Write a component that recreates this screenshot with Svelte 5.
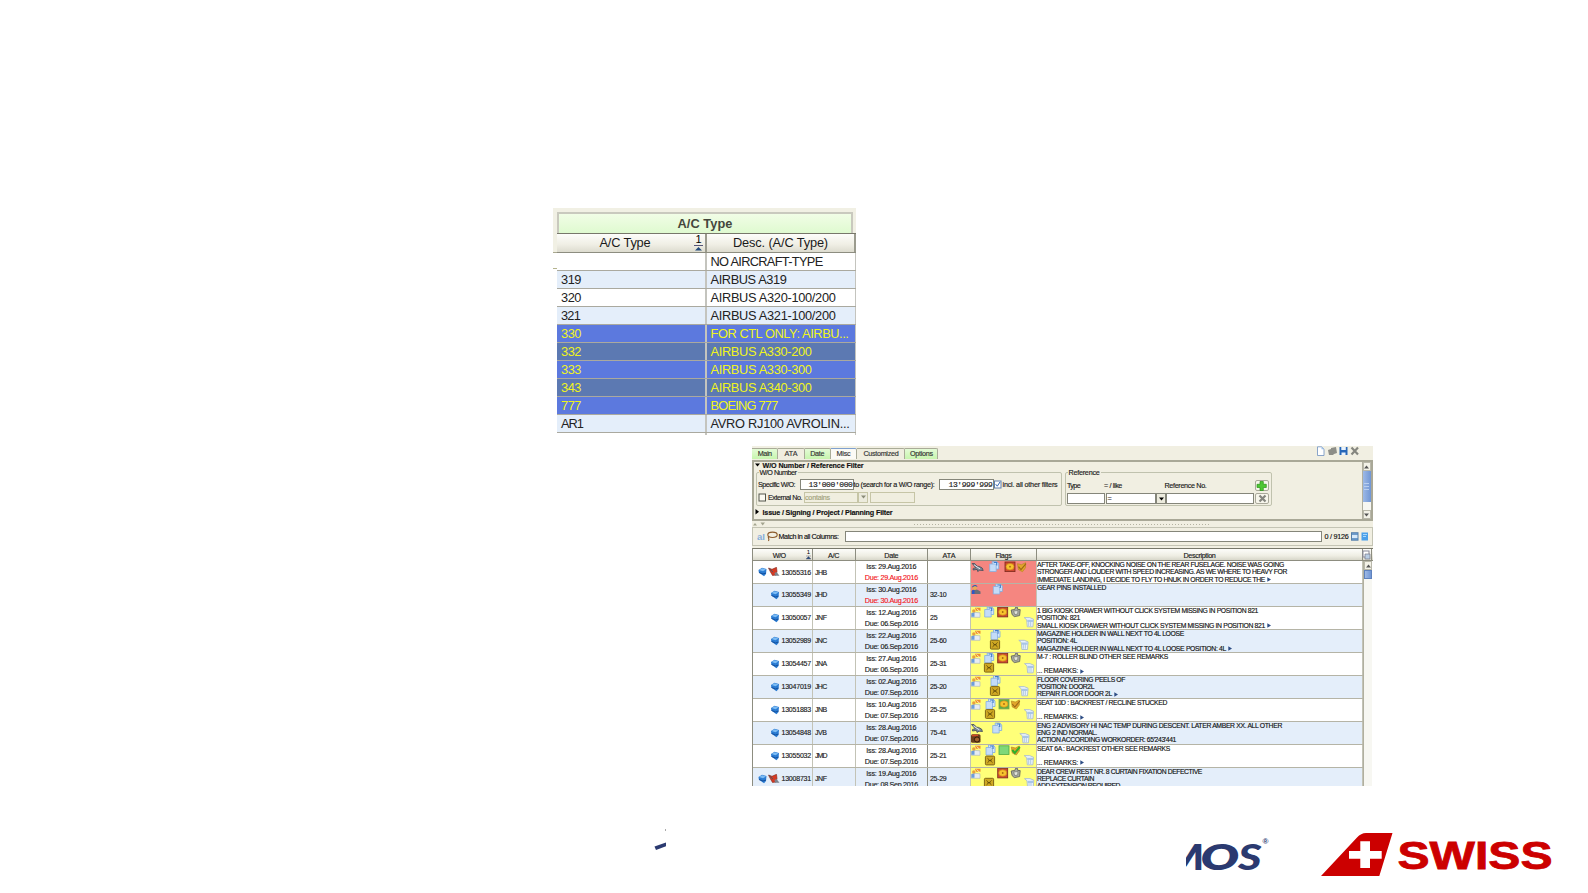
<script>
  // Spaces the letters of a label so that it fills the given width.
  function fit(node, width) {
    const n = [...node.textContent].length;
    const natural = node.getBoundingClientRect().width;
    if (n && width) node.style.letterSpacing = (width - natural) / n + 'px';
  }

  const types = [
    ['', 0, 'NO AIRCRAFT-TYPE', 112],
    ['319', 20, 'AIRBUS A319', 76],
    ['320', 20, 'AIRBUS A320-100/200', 125],
    ['321', 19, 'AIRBUS A321-100/200', 125],
    ['330', 20, 'FOR CTL ONLY: AIRBU...', 138],
    ['332', 20, 'AIRBUS A330-200', 101],
    ['333', 20, 'AIRBUS A330-300', 101],
    ['343', 20, 'AIRBUS A340-300', 101],
    ['777', 20, 'BOEING 777', 67],
    ['AR1', 22, 'AVRO RJ100 AVROLIN...', 139]
  ];

  const tabs = [
    ['Main', 26.4, 14, 'g'], ['ATA', 26.3, 13, ''], ['Date', 26, 14, 'g'],
    ['Misc', 26.7, 14, 'on'], ['Customized', 48, 35, ''], ['Options', 33, 23, 'g']
  ];

  const rem = ['... REMARKS:', 41, 1];
  const rows = [
    { no: "13055316", ac: 'JHB', iss: '29.Aug.2016', due: '29.Aug.2016', late: 1, ata: '', bell: 1, bg: 'red',
      f: [['plane', 6.7, 6], ['doc', 22.7, 5.5], ['seal', 39, 5.7], ['tick', 50.5, 5.7]],
      d: [['AFTER TAKE-OFF, KNOCKING NOISE ON THE REAR FUSELAGE. NOISE WAS GOING', 247], ['STRONGER AND LOUDER WITH SPEED INCREASING. AS WE WHERE TO HEAVY FOR', 250], ['IMMEDIATE LANDING, I DECIDE TO FLY TO HNUK IN ORDER TO REDUCE THE', 228, 1]] },
    { no: "13055349", ac: 'JHD', iss: '30.Aug.2016', due: '30.Aug.2016', late: 1, ata: '32-10', bg: 'red',
      f: [['person', 5, 5.5], ['doc', 26.3, 5]],
      d: [['GEAR PINS INSTALLED', 69]] },
    { no: "13050057", ac: 'JNF', iss: '12.Aug.2016', due: '06.Sep.2016', ata: '25', bg: 'yel',
      f: [['man', 5, 5.3], ['doc', 17.7, 5], ['seal', 31.7, 5], ['cup', 44.7, 5], ['bin', 57.7, 15]],
      d: [['1 BIG KIOSK DRAWER WITHOUT CLICK SYSTEM MISSING IN POSITION 821', 221], ['POSITION: 821', 43], ['SMALL KIOSK DRAWER WITHOUT CLICK SYSTEM MISSING IN POSITION 821', 228, 1]] },
    { no: "13052989", ac: 'JNC', iss: '22.Aug.2016', due: '06.Sep.2016', ata: '25-60', bg: 'yel',
      f: [['man', 5, 5.3], ['doc', 24, 4.7], ['box', 24, 14.7], ['bin', 52.3, 14.7]],
      d: [['MAGAZINE HOLDER IN WALL NEXT TO 4L LOOSE', 147], ['POSITION: 4L', 40], ['MAGAZINE HOLDER IN WALL NEXT TO 4L LOOSE POSITION: 4L', 189, 1]] },
    { no: "13054457", ac: 'JNA', iss: '27.Aug.2016', due: '06.Sep.2016', ata: '25-31', bg: 'yel',
      f: [['man', 5, 5.3], ['doc', 17.7, 5], ['seal', 31.7, 5], ['cup', 44.7, 5], ['box', 18, 14.7], ['bin', 58, 15]],
      d: [['M-7 : ROLLER BLIND OTHER SEE REMARKS', 131], ['', 0], rem] },
    { no: "13047019", ac: 'JHC', iss: '02.Aug.2016', due: '07.Sep.2016', ata: '25-20', bg: 'yel',
      f: [['man', 5, 5.3], ['doc', 24, 4.7], ['box', 24, 15], ['bin', 52.3, 15]],
      d: [['FLOOR COVERING PEELS OF', 88], ['POSITION: DOOR2L', 57], ['REPAIR FLOOR DOOR 2L', 75, 1]] },
    { no: "13051883", ac: 'JNB', iss: '10.Aug.2016', due: '07.Sep.2016', ata: '25-25', bg: 'yel',
      f: [['man', 5, 5.3], ['doc', 19, 5], ['gseal', 33, 5], ['tick', 44.3, 5], ['box', 19, 15], ['bin', 57.7, 15]],
      d: [['SEAT 10D : BACKREST / RECLINE STUCKED', 130], ['', 0], rem] },
    { no: "13054848", ac: 'JVB', iss: '28.Aug.2016', due: '07.Sep.2016', ata: '75-41', bg: 'yel',
      f: [['plane', 6, 6], ['doc', 25.7, 6], ['cam', 5, 16.5], ['bin', 53.3, 16]],
      d: [['ENG 2 ADVISORY HI NAC TEMP DURING DESCENT. LATER AMBER XX. ALL OTHER', 245], ['ENG 2 IND NORMAL.', 60], ["ACTION ACCORDING WORKORDER: 65'243'441", 139]] },
    { no: "13055032", ac: 'JMD', iss: '28.Aug.2016', due: '07.Sep.2016', ata: '25-21', bg: 'yel',
      f: [['man', 5, 5.3], ['doc', 19, 5], ['green', 33, 5.3], ['gtick', 44.3, 5], ['box', 19, 15.5], ['bin', 57.7, 15]],
      d: [['SEAT 6A : BACKREST OTHER SEE REMARKS', 133], ['', 0], rem] },
    { no: "13008731", ac: 'JNF', iss: '19.Aug.2016', due: '08.Sep.2016', ata: '25-29', bell: 1, bg: 'yel',
      f: [['man', 5, 5.3], ['seal', 31.7, 5], ['cup', 44.7, 5], ['box', 18, 14.7], ['bin', 58, 15]],
      d: [['DEAR CREW REST NR. 8 CURTAIN FIXATION DEFECTIVE', 165], ['REPLACE CURTAIN', 57], ['ADD EXTENSION REQUIRED', 83]] }
  ];
</script>

{#snippet t(text, width)}{#if text}<span class="t" use:fit={width}>{text}</span>{/if}{/snippet}

{#snippet flag(kind)}
  {#if kind === 'plane'}
    <path d="M-5.5-3.5L-3-3.5-.5-.8 1.5-.6 4.5 1 5.5 3.5 2 3.2 0 4.5-.5 2.4-4.5 3-4.5 1.4-1.8.8z" fill="#7c8998" stroke="#414a56" stroke-width=".8" />
    <path d="M-3.5-2L2.5 2" stroke="#e3e9ef" stroke-width="1" />
  {:else if kind === 'doc'}
    <path d="M-1.5-5H3L5-3V2.5H-1.5z" fill="#d4e6fb" stroke="#7ba9e0" stroke-width=".8" />
    <path d="M-4-2.5H1L2.5-1V5H-4z" fill="#c4dcf8" stroke="#86aee0" stroke-width=".8" />
    <path d="M0-4H3V-1" fill="none" stroke="#3f7ccb" stroke-width="1.2" />
  {:else if kind === 'seal' || kind === 'gseal'}
    <rect x="-5" y="-4.7" width="10" height="9.6" fill={kind === 'seal' ? '#cf4a30' : '#5fae45'} stroke={kind === 'seal' ? '#7c2a1c' : '#7fa050'} stroke-width=".8" />
    <ellipse rx="4" ry="3.2" fill="#f8c32e" stroke="#c98a18" stroke-width=".6" />
    <circle r=".9" fill="#a86a10" />
  {:else if kind === 'tick' || kind === 'gtick'}
    <path d="M-4-3L0-2 4-4 4 1 1 5-3 3z" fill="#e2a52c" stroke="#b98a20" stroke-width=".7" />
    <path d="M-3 0L-.5 3 4.5-3" fill="none" stroke={kind === 'tick' ? '#9a6616' : '#2fb02a'} stroke-width={kind === 'tick' ? 1.1 : 2} />
  {:else if kind === 'green'}
    <rect x="-5" y="-4.5" width="10" height="8.6" fill="#7ed879" stroke="#4da845" stroke-width=".8" />
  {:else if kind === 'person'}
    <path d="M-4.500 4.500V1.500L-2.500 0H.5L2 .5 4.500 2V4.500z" fill="#6a6d78" />
    <path d="M-4 4.500V1L-1.500 .3V4.500z" fill="#2e55c8" />
    <circle cx="-1.300" cy="-1.800" r="2.300" fill="#e9ad55" />
    <path d="M-4-2C-4-5 1-5.600 1.400-2.600L-1-3.400z" fill="#3858b4" />
  {:else if kind === 'man'}
    <path d="M-4.500 5V1L-2 0 4 .5V5z" fill="#e7ecf2" stroke="#a6b2bf" stroke-width=".6" />
    <path d="M-4.500 4.500V1L-1.500 0V4.500z" fill="#6d9ddb" />
    <circle cx="-2.200" cy="-1.400" r="1.700" fill="#e9a13c" />
    <path d="M-1-4.500L4.500-4.500 4.500-1.500 0-1.500z" fill="#ef8f2a" />
    <path d="M.5-3.800L3.700-1" stroke="#f8ead0" stroke-width=".9" />
  {:else if kind === 'cup'}
    <path d="M-4.500-2L-1-2.500 0-4.800 1.800-4.600 2-2.600 4.500-2.400 3.900 3.600-1.400 4.600-3.600 2.600z" fill="#a9aca2" stroke="#62645c" stroke-width=".9" />
    <path d="M-2-1L2.200-1.500 2 2-1 2.600z" fill="#e2e5dc" stroke="#6b6d65" stroke-width=".6" />
  {:else if kind === 'box'}
    <rect x="-4.600" y="-4.400" width="9.200" height="8.800" rx="1" fill="#cfa823" stroke="#806617" stroke-width="1" />
    <path d="M-2.500-2.200C0 0 0 0-2.500 2.200M2.500-2.200C0 0 0 0 2.500 2.200M-1.300 0H1.300" fill="none" stroke="#594508" stroke-width=".9" />
  {:else if kind === 'bin'}
    <path d="M-4.500-4.400H1L4.800-2.800 4.200 4.800-1.400 4.800-2-2.200z" fill="#eaf2fb" stroke="#a5b8cf" stroke-width=".8" />
    <path d="M-1.500-2.200H4.400V0H-1.500z" fill="#a9c6ea" /><path d="M0-1.500V4M2-1.500V4" stroke="#a9c3e2" stroke-width=".9" />
  {:else if kind === 'cam'}
    <rect x="-5" y="-4.300" width="9.500" height="8.600" rx="1.500" fill="#6b3f1d" />
    <path d="M-4-3H2" stroke="#d24a26" stroke-width="1.600" />
    <circle cx="1" cy="1" r="2.600" fill="#a3622c" stroke="#321a0a" stroke-width="1" />
  {/if}
{/snippet}

<main>
  <section class="types">
    <div class="group"><b>{@render t('A/C Type', 55)}</b></div>
    <div class="thead">
      <div class="h1">{@render t('A/C Type', 51)}
        <svg class="sort" width="9" height="18" viewBox="0 0 9 18"><text x="1.500" y="8.500" font-size="11">1</text><path d="M0 11.500H9" stroke="#557" /><path d="M1 16.500L4.500 13 8 16.500z" fill="#234a7c" /></svg>
      </div>
      <div class="h2">{@render t('Desc. (A/C Type)', 95)}</div>
    </div>
    {#each types as [code, cw, desc, dw], i}
      <div class="trow" class:alt={i % 2 === 1} class:sel={i >= 4 && i <= 8}>
        <div>{@render t(code, cw)}</div><div>{@render t(desc, dw)}</div>
      </div>
    {/each}
    <div class="trow last"><div></div><div></div></div>
  </section>

  <section class="wo">
    <div class="tabs">
      {#each tabs as [name, w, tw, c]}
        <div class="tab {c}" style="width:{w}px">{@render t(name, tw)}</div>
      {/each}
      <svg class="tools" width="44" height="11" viewBox="0 0 44 11">
        <path d="M1.500 .8H5.500L8 3.200V9.500H1.500z" fill="#fff" stroke="#6d8fc0" stroke-width=".8" /><path d="M5.500 .8V3.200H8" fill="#9dc0ea" />
        <path d="M12 4L15 3V2L20 1 21 7 18 8 17 9H13z" fill="#8d8e88" />
        <path d="M23.500 1H31.500V9H23.500z" fill="#2767b8" /><path d="M25.300 1H29.800V4H25.300zM25.500 6.500H29.500V9H25.500z" fill="#e9f2fc" />
        <path d="M35.500 1.500L42 8.500M42 1.500L35.500 8.500" stroke="#85867f" stroke-width="2.200" />
      </svg>
    </div>

    <div class="filter">
      <div class="fmain">
        <div class="ftitle"><svg width="5" height="4"><path d="M0 .5H5L2.500 3.500z" /></svg><b>{@render t('W/O Number / Reference Filter', 101)}</b></div>
        <div class="sets">
          <div class="fs one">
            <span class="legend">{@render t('W/O Number', 37)}</span>
            <div class="line">
              <span class="lab" style="width:41.5px">{@render t('Specific W/O:', 37)}</span>
              <span class="inp mono" style="width:54px">{@render t("13'000'000", 44)}</span>
              <span class="lab" style="width:85.5px">{@render t('to (search for a W/O range):', 81)}</span>
              <span class="inp mono" style="width:54.5px">{@render t("13'999'999", 44)}</span>
              <svg class="chk" width="8" height="9"><rect x=".5" y="1" width="6.500" height="7" fill="#fff" stroke="#5c7fae" /><path d="M1.700 4.200L3.300 6.200 6 2" fill="none" stroke="#2f65b0" /></svg>
              <span class="lab">{@render t('incl. all other filters', 55)}</span>
            </div>
            <div class="line two">
              <svg class="chk" width="9" height="9"><rect x="1" y="1" width="6.500" height="7" fill="#fbfaf2" stroke="#55564c" /></svg>
              <span class="lab" style="width:36px">{@render t('External No.', 34)}</span>
              <span class="inp off" style="width:54px">{@render t('contains', 25)}</span>
              <span class="drop off"><svg width="5" height="4"><path d="M0 .5H5L2.500 3.500z" fill="#8a8b78" /></svg></span>
              <span class="inp off" style="width:45px;margin-left:2px"></span>
            </div>
          </div>
          <div class="fs ref">
            <span class="legend">{@render t('Reference', 31)}</span>
            <div class="line heads">
              <span class="lab" style="width:37px">{@render t('Type', 13)}</span>
              <span class="lab" style="width:60.5px">{@render t('= / like', 18)}</span>
              <span class="lab" style="width:90px">{@render t('Reference No.', 42)}</span>
              <span class="btn"><svg width="11" height="10"><path d="M4 .5H7.300V3.300H10.300V6.500H7.300V9.500H4V6.500H1V3.300H4z" fill="#4fc734" stroke="#2c941a" stroke-width=".7" /></svg></span>
            </div>
            <div class="line boxes">
              <span class="inp" style="width:37.5px"></span>
              <span class="inp" style="width:50.5px;margin-left:1px;padding-left:1px">=</span>
              <span class="drop"><svg width="5" height="4"><path d="M0 .5H5L2.500 3.500z" /></svg></span>
              <span class="inp" style="width:88px"></span>
              <span class="btn" style="margin-left:1px"><svg width="11" height="9"><path d="M2.500 1.500L8.500 7.500M8.500 1.500L2.500 7.500" stroke="#85867f" stroke-width="2.200" /></svg></span>
            </div>
          </div>
        </div>
        <div class="ftitle second"><svg width="5" height="6"><path d="M.5 0L4 2.700.5 5.500z" /></svg><b>{@render t('Issue / Signing / Project / Planning Filter', 130)}</b></div>
      </div>
      <div class="bar">
        <span class="sb"><svg width="5" height="4"><path d="M0 3.500H5L2.500 .5z" fill="#555" /></svg></span>
        <span class="thumb"><i></i><i></i><i></i></span>
        <span class="sb end"><svg width="5" height="4"><path d="M0 .5H5L2.500 3.500z" fill="#555" /></svg></span>
      </div>
    </div>

    <div class="split"><svg width="12" height="4"><path d="M0 3.500H4L2 1zM7.500 .5H12L9.700 3.500z" fill="#a3a48e" /></svg><div class="dots"></div></div>

    <div class="search">
      <svg width="22" height="11" viewBox="0 0 22 11"><text x="0" y="9" font-size="9.500" font-weight="bold" fill="#86aedb">aI</text>
        <ellipse cx="15.500" cy="3.800" rx="4.700" ry="2.700" fill="none" stroke="#8b5a2a" stroke-width="1.100" /><path d="M12 5.500C10 6.500 13 7 11.500 10" fill="none" stroke="#8b5a2a" stroke-width="1.100" /></svg>
      <span class="match">{@render t('Match in all Columns:', 60)}</span>
      <span class="inp wide"></span>
      <span class="count">{@render t('0 / 9126', 24)}</span>
      <svg width="18" height="9"><rect x=".5" y=".7" width="6.500" height="7.500" fill="#d6e9fa" stroke="#557ea8" /><path d="M1 2H7M1 7H7" stroke="#4c83bb" stroke-width="1.300" /><rect x="10.500" y=".5" width="6.500" height="8" fill="#4aa0ea" /><path d="M12 2.500H16M12 4.500H15" stroke="#a8d8fa" /></svg>
    </div>

    <div class="grid">
      <div class="ghead">
        <div class="wcol">{@render t('W/O', 13)}<svg class="sort" width="5" height="11"><text x=".8" y="5" font-size="6">1</text><path d="M0 7H5M0 10H5L2.500 7.500z" fill="#234a7c" stroke="#667" stroke-width=".5" /></svg></div>
        <div>{@render t('A/C', 11)}</div><div>{@render t('Date', 14)}</div><div>{@render t('ATA', 13)}</div>
        <div>{@render t('Flags', 16)}</div><div>{@render t('Description', 32)}</div>
        <div><svg width="9" height="10"><rect x="1" y="1" width="6" height="6" fill="#fff" stroke="#889" /><path d="M3 4H8V9H3z" fill="#b9cde4" stroke="#778" stroke-width=".7" /></svg></div>
      </div>
      <div class="gbody">
        <div class="rows">
          {#each rows as r, i}
            <div class="grow" class:alt={i % 2 === 1}>
              <div class="no">
                <svg width={r.bell ? 24 : 12} height="10" viewBox="{r.bell ? -12 : 0} 0 {r.bell ? 24 : 12} 10">
                  <g transform="translate({r.bell ? -12 : 0.5} 0)"><path d="M.5 3L4 .8 8.500 2 8 7 6 9.300 3.500 7.500.8 5.500z" fill="#2a7bd2" /><path d="M1 3L4.200 1.200 8 2.400 5 4.300z" fill="#7dbcf4" /><path d="M1 5.500L5 7 8 6" fill="none" stroke="#144f9c" /></g>
                  {#if r.bell}<path d="M-1.500 1L2 2.300 6.500 .3 7 4.500 6 8 2.500 8.500 .5 5z" fill="#d63a24" stroke="#80261a" stroke-width=".6" /><path d="M4.500 6L6.500 5 9.500 8.700H5z" fill="#7b828c" /><path d="M-1 1.500L3 5" stroke="#4e5662" stroke-width="1" />{/if}
                </svg>
                {@render t(r.no, 29.5)}
              </div>
              <div class="ac">{@render t(r.ac, 11.5)}</div>
              <div class="date"><div>{@render t('Iss: ' + r.iss, 50)}</div><div class:late={r.late}>{@render t('Due: ' + r.due, 53)}</div></div>
              <div class="ata">{@render t(r.ata, r.ata.length > 2 ? 16.5 : 7.5)}</div>
              <div class="flags {r.bg}">
                <svg width="66" height="22" viewBox="0 0 66 22">
                  {#each r.f as [k, x, y]}<g transform="translate({x} {y})">{@render flag(k)}</g>{/each}
                </svg>
              </div>
              <div class="desc">
                {#each r.d as [s, w, more]}
                  <div>{@render t(s, w)}{#if more}<svg width="8" height="5"><path d="M2.300 .2L6 2.500 2.300 4.800z" fill="#2d4d85" /></svg>{/if}</div>
                {/each}
              </div>
            </div>
          {/each}
        </div>
        <div class="bar">
          <span class="sb"><svg width="5" height="4"><path d="M0 3.500H5L2.500 .5z" fill="#555" /></svg></span>
          <span class="thumb short"></span>
        </div>
      </div>
    </div>
  </section>

  <footer>
    <svg class="mark" width="14" height="25" viewBox="0 0 14 25"><path d="M.5 18.500L12 14.500V18.300L2 22z" fill="#2b3a70" /><path d="M11.500 1V3" stroke="#aaa" stroke-width="1" /></svg>
    <svg class="mos" width="86" height="48" viewBox="1186 832 86 48">
      <g fill="#2b3a70" font-family="Lato" font-weight="900" font-size="35.500">
        <text x="1163" y="869.700" textLength="41.500" lengthAdjust="spacingAndGlyphs">M</text>
        <text x="1200.500" y="869.500" font-style="italic" font-weight="800" textLength="38.500" lengthAdjust="spacingAndGlyphs">O</text>
        <text x="1238" y="869.500" font-style="italic" textLength="23.500" lengthAdjust="spacingAndGlyphs">S</text>
      </g>
      <text x="1262.500" y="844" font-size="8" font-weight="bold" fill="#2b3a70">®</text>
    </svg>
    <svg class="swiss" width="234" height="48" viewBox="1320 832 234 48">
      <path d="M1321 876L1357 837.500Q1361 833 1366 833H1392.500L1379.300 876z" fill="#c00" />
      <path d="M1360.300 841.300H1370V851H1381.700V858.700H1370V868H1360.300V858.700H1349V851H1360.300z" fill="#fff" />
      <text x="1397.500" y="868.500" font-size="38.500" font-weight="bold" fill="#c00" stroke="#c00" stroke-width=".8" textLength="155" lengthAdjust="spacingAndGlyphs">SWISS</text>
    </svg>
  </footer>
</main>

<style>
  :global(body) { margin: 0; background: #fff; }
  main { width: 1588px; height: 893px; overflow: hidden; display: flex; flex-direction: column; align-items: flex-start; font-family: "Liberation Sans", Arial, sans-serif; color: #1a1a1a; }
  svg { display: block; flex: none; }
  .t { display: inline-block; white-space: pre; flex: none; }

  .types { margin: 208px 0 0 553px; width: 303px; height: 227px; flex: none; box-sizing: border-box; padding-top: 4px; overflow: hidden; background: linear-gradient(#f1f0e4 44px, #a9a890 44px 45px, #fff 45px 60px, #b5b48e 60px 61px, #fff 61px); font-size: 12.8px; }
  .group { margin-left: 4px; width: 296px; height: 20.500px; box-sizing: border-box; border: 2px solid #c9c9be; border-bottom: 0; background: linear-gradient(#f1fde6, #dffad0); display: flex; justify-content: center; align-items: center; color: #44473c; }
  .thead { display: flex; height: 20px; box-sizing: border-box; border-top: 1px solid #77776a; border-bottom: 1px solid #8d8d80; background: linear-gradient(#fdfdfa, #efeee4 60%, #dddccf); margin-left: 4px; }
  .thead > div { display: flex; justify-content: center; align-items: center; box-sizing: border-box; border-right: 2px solid #9b9b8e; }
  .h1 { width: 150px; position: relative; padding-right: 12px; }
  .h1 .sort { position: absolute; right: 2px; top: 0; }
  .h2 { width: 149px; }
  .trow { display: flex; margin-left: 4px; height: 18.030px; box-sizing: border-box; border-bottom: 1px solid #aaa99f; background: #fff; color: #222; }
  .trow > div { box-sizing: border-box; width: 149.500px; border-right: 2px solid #c4c4be; padding-left: 4px; display: flex; align-items: center; }
  .trow > div:last-child { width: 149px; border-right-width: 1px; }
  .trow.alt, .grow.alt { background: #e4eefa; }
  .trow.sel { background: #5c79de; color: #f0f41c; }
  .trow.sel.alt { background: #5c79b2; }

  .wo { margin: 11px 0 0 752px; width: 621px; height: 340px; flex: none; overflow: hidden; background: #f1efe2; font-size: 7.200px; display: flex; flex-direction: column; -webkit-text-stroke: .15px currentColor; }
  .tabs { display: flex; height: 14px; box-sizing: border-box; padding-top: 1.500px; flex: none; }
  .tab { height: 11.500px; box-sizing: border-box; border: 1px solid #a9ab98; border-left-width: 0; border-bottom: 0; border-top-right-radius: 2px; display: flex; justify-content: center; align-items: center; background: #f0eee0; color: #333; }
  .tab.g { background: linear-gradient(#e4fbd6, #c7f5ae); }
  .tab.on { background: #fbfaf5; border-top: 1px solid #7fa0cf; }
  .tools { margin: -2px 13px 0 auto; }
  .filter { height: 61px; flex: none; box-sizing: border-box; border: 2px solid #a9a897; display: flex; padding: 0; }
  .fmain { flex: 1; }
  .ftitle { display: flex; align-items: center; height: 8px; padding-left: 1px; gap: 2.500px; color: #111; margin-top: -1px; }
  .second { margin-top: 2px; }
  .sets { display: flex; gap: 3px; padding: 3px 0 0 1.500px; }
  .fs { border: 1px solid #c0c2ae; border-radius: 2px; height: 34px; box-sizing: border-box; position: relative; }
  .one { width: 306px; padding: 6px 0 0 1.500px; }
  .ref { width: 207px; padding: 7px 0 0 1.500px; }
  .legend { position: absolute; left: 2px; top: -4.500px; background: #f1efe2; padding: 0 1px; line-height: 8px; }
  .line { display: flex; align-items: center; height: 11px; white-space: nowrap; }
  .two { margin-top: 1.500px; }
  .lab { display: block; flex: none; line-height: 9px; }
  .inp { height: 11px; box-sizing: border-box; border: 1px solid #85867a; background: #fff; flex: none; display: flex; align-items: center; }
  .mono { font-family: "Liberation Mono", monospace; font-size: 8px; justify-content: flex-end; }
  .chk { margin: 0 1px 0 0; }
  .off { background: #f0eedf; border-color: #c6c5a6; color: #a2a27c; }
  .drop { width: 10px; height: 11px; box-sizing: border-box; border: 1px solid #85867a; background: #ecebdd; display: flex; align-items: center; justify-content: center; flex: none; }
  .drop.off { border-color: #c6c5a6; }
  .btn { width: 14px; height: 11px; box-sizing: border-box; border: 1px solid #aaa99a; border-radius: 2px; background: #f7f6ec; display: flex; flex: none; align-items: center; justify-content: center; }
  .boxes { margin-top: 2px; }
  .bar { width: 9px; flex: none; background: #f7f7f2; border-left: 1px solid #b0af9f; box-sizing: border-box; display: flex; flex-direction: column; }
  .filter .bar { width: 9.500px; }
  .sb { height: 9px; box-sizing: border-box; border: 1px solid #b9b8aa; background: #f3f2e8; display: flex; align-items: center; justify-content: center; flex: none; }
  .end { margin-top: auto; }
  .thumb { height: 31px; background: linear-gradient(90deg, #9db9e6, #7196d4); display: flex; flex-direction: column; gap: 2px; align-items: center; justify-content: center; }
  .thumb i { width: 5px; height: 1px; background: #b9cff0; }
  .short { height: 9px; border: 1px solid #5f82bd; box-sizing: border-box; }
  .split { height: 6px; display: flex; align-items: center; flex: none; padding-left: 1px; }
  .dots { margin-left: 149px; width: 297px; height: 1px; background: repeating-linear-gradient(90deg, #b4b3a2 0 1px, transparent 1px 3px); }
  .search { height: 19px; flex: none; box-sizing: border-box; border: 1px solid #c4c4b4; display: flex; align-items: center; padding-left: 3.500px; }
  .match { width: 66.500px; flex: none; color: #111; }
  .wide { width: 477px; }
  .count { width: 29px; text-align: center; flex: none; color: #111; }
  .grid { margin-top: 2px; border-top: 1px solid #77776a; flex: 1; min-height: 0; display: flex; flex-direction: column; border-left: 1px solid #8d8d80; box-sizing: border-box; }
  .ghead, .grow { display: grid; grid-template-columns: 59.500px 43.200px 72.300px 43px 66px 326px 9px; }
  .ghead { height: 12px; flex: none; background: linear-gradient(#fdfdfa, #efeee4 60%, #d8d7ca); border-bottom: 1px solid #8d8d80; box-sizing: border-box; }
  .ghead > div { border-right: 1px solid #8d8d80; display: flex; align-items: center; justify-content: center; box-sizing: border-box; position: relative; padding-top: 1px; }
  .ghead .wcol { padding-right: 6px; }
  .ghead .sort { position: absolute; right: 1px; top: 0; }
  .gbody { display: flex; flex: 1; min-height: 0; overflow: hidden; background: #fff; }
  .rows { width: 610px; flex: none; }
  .grow { height: 22.970px; box-sizing: border-box; border-bottom: 1px solid #b5b4a6; background: #fff; grid-template-columns: 59.500px 43.200px 72.300px 43px 66px 326px; font-size: 7px; }
  .grow > div { border-right: 1px solid #c3c3b6; box-sizing: border-box; min-width: 0; overflow: hidden; }
  .no { display: flex; align-items: center; justify-content: flex-end; padding-right: .5px; }
  .ac { display: flex; align-items: center; padding-left: 2.500px; }
  .grow > .date { display: flex; flex-direction: column; align-items: center; line-height: 11px; height: 22px; border-color: #8d8d80; font-size: 7.200px; }
  .late { color: #f3161b; }
  .ata { display: flex; align-items: center; padding-left: 2px; }
  .flags.red { background: #f58680; }
  .flags.yel { background: #ffff79; }
  .desc { line-height: 7.300px; font-size: 6.800px; color: #111; }
  .desc > div { height: 7.300px; display: flex; align-items: center; }

  footer { display: flex; margin-top: 43px; align-items: flex-start; height: 60px; }
  .mark { margin-left: 654px; margin-top: -1px; }
  .mos { margin-left: 518px; margin-top: 3px; }
  .swiss { margin-left: 48px; margin-top: 3px; }
</style>
